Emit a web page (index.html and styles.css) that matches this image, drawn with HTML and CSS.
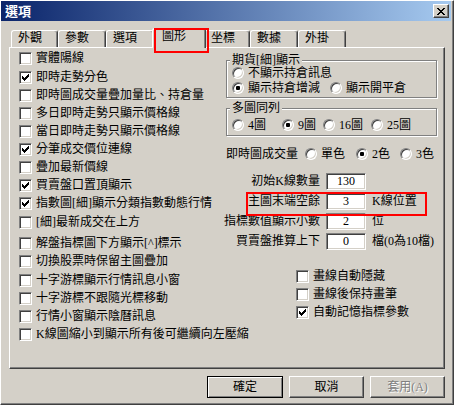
FILE: index.html
```html
<!DOCTYPE html>
<html lang="zh-Hant">
<head>
<meta charset="utf-8">
<title>選項</title>
<link rel="stylesheet" href="styles.css">
</head>
<body>
<div class="window">
  <div class="titlebar">
    <span class="title">選項</span>
    <span class="close"><svg width="8" height="7" viewBox="0 0 8 7"><path d="M0 0h2v1h-2zM6 0h2v1h-2zM1 1h2v1h-2zM5 1h2v1h-2zM2 2h4v1h-4zM3 3h2v1h-2zM2 4h4v1h-4zM1 5h2v1h-2zM5 5h2v1h-2zM0 6h2v1h-2zM6 6h2v1h-2z"/></svg></span>
  </div>
  <div class="client">
    <div class="tabs">
      <div class="tab">外觀</div>
      <div class="tab">參數</div>
      <div class="tab">選項</div>
      <div class="tab sel">圖形</div>
      <div class="tab">坐標</div>
      <div class="tab">數據</div>
      <div class="tab">外掛</div>
    </div>
    <div class="panel">
      <div class="col-left">
        <div class="cb"><span class="box"></span>實體陽線</div>
        <div class="cb mt1"><span class="box"><svg class="chk" width="7" height="7" viewBox="0 0 7 7"><path d="M0 2h1v3h-1zM1 3h1v3h-1zM2 4h1v3h-1zM3 3h1v3h-1zM4 2h1v3h-1zM5 1h1v3h-1zM6 0h1v3h-1z"/></svg></span>即時走勢分色</div>
        <div class="cb"><span class="box"></span>即時圖成交量疊加量比、持倉量</div>
        <div class="cb"><span class="box"></span>多日即時走勢只顯示價格線</div>
        <div class="cb"><span class="box"></span>當日即時走勢只顯示價格線</div>
        <div class="cb"><span class="box"><svg class="chk" width="7" height="7" viewBox="0 0 7 7"><path d="M0 2h1v3h-1zM1 3h1v3h-1zM2 4h1v3h-1zM3 3h1v3h-1zM4 2h1v3h-1zM5 1h1v3h-1zM6 0h1v3h-1z"/></svg></span>分筆成交價位連線</div>
        <div class="cb"><span class="box"></span>疊加最新價線</div>
        <div class="cb"><span class="box"><svg class="chk" width="7" height="7" viewBox="0 0 7 7"><path d="M0 2h1v3h-1zM1 3h1v3h-1zM2 4h1v3h-1zM3 3h1v3h-1zM4 2h1v3h-1zM5 1h1v3h-1zM6 0h1v3h-1z"/></svg></span>買賣盤口置頂顯示</div>
        <div class="cb"><span class="box"><svg class="chk" width="7" height="7" viewBox="0 0 7 7"><path d="M0 2h1v3h-1zM1 3h1v3h-1zM2 4h1v3h-1zM3 3h1v3h-1zM4 2h1v3h-1zM5 1h1v3h-1zM6 0h1v3h-1z"/></svg></span>指數圖[細]顯示分類指數動態行情</div>
        <div class="cb mt1"><span class="box"></span>[細]最新成交在上方</div>
        <div class="cb mt3"><span class="box"></span>解盤指標圖下方顯示[^]標示</div>
        <div class="cb"><span class="box"></span>切換股票時保留主圖疊加</div>
        <div class="cb mt1"><span class="box"></span>十字游標顯示行情訊息小窗</div>
        <div class="cb"><span class="box"></span>十字游標不跟隨光標移動</div>
        <div class="cb"><span class="box"></span>行情小窗顯示陰曆訊息</div>
        <div class="cb"><span class="box"></span>K線圖縮小到顯示所有後可繼續向左壓縮</div>
      </div>
      <div class="col-right">
        <fieldset class="group g1">
          <legend>期貨[細]顯示</legend>
          <div class="rrow r1"><span class="radio"><span class="rb"></span>不顯示持倉訊息</span></div>
          <div class="rrow r2"><span class="radio"><span class="rb on"></span>顯示持倉增減</span><span class="radio ml10"><span class="rb"></span>顯示開平倉</span></div>
        </fieldset>
        <fieldset class="group g2">
          <legend>多圖同列</legend>
          <div class="rrow r1"><span class="radio"><span class="rb"></span>4圖</span><span class="radio ml16"><span class="rb on"></span>9圖</span><span class="radio ml7"><span class="rb"></span>16圖</span><span class="radio ml8"><span class="rb"></span>25圖</span></div>
        </fieldset>
        <div class="rrow vol"><span>即時圖成交量</span><span class="radio ml7"><span class="rb"></span>單色</span><span class="radio ml11"><span class="rb on"></span>2色</span><span class="radio ml10"><span class="rb"></span>3色</span></div>
        <div class="frow first"><span class="lbl">初始K線數量</span><span class="field">130</span></div>
        <div class="frow hl"><span class="lbl">主圖末端空餘</span><span class="field">3</span><span class="unit">K線位置</span></div>
        <div class="frow"><span class="lbl">指標數值顯示小數</span><span class="field">2</span><span class="unit">位</span></div>
        <div class="frow"><span class="lbl">買賣盤推算上下</span><span class="field">0</span><span class="unit">檔(0為10檔)</span></div>
        <div class="rchecks">
          <div class="cb"><span class="box"></span>畫線自動隱藏</div>
          <div class="cb"><span class="box"></span>畫線後保持畫筆</div>
          <div class="cb"><span class="box"><svg class="chk" width="7" height="7" viewBox="0 0 7 7"><path d="M0 2h1v3h-1zM1 3h1v3h-1zM2 4h1v3h-1zM3 3h1v3h-1zM4 2h1v3h-1zM5 1h1v3h-1zM6 0h1v3h-1z"/></svg></span>自動記憶指標參數</div>
        </div>
      </div>
    </div>
    <div class="buttons">
      <div class="btn def">確定</div>
      <div class="btn">取消</div>
      <div class="btn dis">套用(A)</div>
    </div>
  </div>
</div>
</body>
</html>
```

FILE: styles.css
```css
* { box-sizing: border-box; }
html, body { margin: 0; padding: 0; }
body {
  width: 454px;
  height: 405px;
  overflow: hidden;
  background: #d4d0c8;
  font-family: "Liberation Serif", "Noto Sans CJK TC", serif;
  font-size: 12px;
  color: #000;
}
.window {
  width: 454px;
  height: 405px;
  background: #d4d0c8;
  border: 1px solid;
  border-color: #fff #404040 #404040 #fff;
  box-shadow: inset -1px -1px 0 #808080;
  padding: 0 2px 2px 0;
}
.titlebar {
  height: 20px;
  display: flex;
  align-items: flex-start;
  background: linear-gradient(to right, #0a246a, #a6caf0);
  padding-left: 4px;
}
.title {
  color: #fff;
  font-weight: bold;
  font-size: 13px;
  line-height: 20px;
  padding-top: 1px;
}
.close {
  margin-left: auto;
  margin-top: 3px;
  margin-right: 2px;
  width: 16px;
  height: 14px;
  background: #d4d0c8;
  border: 1px solid;
  border-color: #fff #404040 #404040 #fff;
  box-shadow: inset -1px -1px 0 #808080;
  display: flex;
  align-items: center;
  justify-content: center;
}
.close svg { display: block; }
.client { padding: 7px 6px 0 8px; }
.tabs {
  display: flex;
  align-items: flex-end;
  height: 19px;
  margin-left: 2px;
}
.tab {
  width: 48px;
  height: 17px;
  border-top: 1px solid #fff;
  border-left: 1px solid #fff;
  border-right: 1px solid #404040;
  box-shadow: inset -1px 0 0 #808080;
  border-radius: 3px 3px 0 0;
  padding-left: 6px;
  line-height: 14px;
  white-space: nowrap;
}
.tab:first-child { width: 47px; }
.tab.sel {
  width: 54px;
  height: 20px;
  margin: 0 -2px -1px;
  padding-left: 9px;
  position: relative;
  z-index: 1;
  background: #d4d0c8;
}
.tab.sel + .tab { width: 46px; }
.tab.sel::after {
  content: "";
  position: absolute;
  left: 1px;
  top: -1px;
  width: 51px;
  height: 21px;
  border: 2px solid #f00;
}
.panel {
  display: flex;
  height: 322px;
  border: 1px solid;
  border-color: #fff #404040 #404040 #fff;
  box-shadow: inset -1px -1px 0 #808080;
}
.col-left {
  width: 216px;
  flex: none;
  padding: 1px 0 0 9px;
}
.cb {
  display: flex;
  align-items: center;
  gap: 4px;
  height: 18px;
  line-height: 18px;
  white-space: nowrap;
}
.mt1 { margin-top: 1px; }
.mt3 { margin-top: 3px; }
.box {
  width: 13px;
  height: 13px;
  flex: none;
  background: #fff;
  border: 1px solid;
  border-color: #808080 #fff #fff #808080;
  box-shadow: inset 1px 1px 0 #404040, inset -1px -1px 0 #d4d0c8;
  display: flex;
  align-items: center;
  justify-content: center;
}
.chk { display: block; }
.col-right {
  width: 210px;
  flex: none;
  padding-top: 7px;
}
.group {
  margin: 0;
  padding: 0 0 2px 5px;
  width: 211px;
  min-width: 0;
  border: 1px solid #808080;
  box-shadow: inset 1px 1px 0 #fff, 1px 1px 0 #fff;
}
.group legend {
  padding: 0 2px;
  margin-left: -2px;
  line-height: 11px;
  background: #d4d0c8;
}
.g1 { height: 43px; }
.g2 { height: 33px; margin-top: 5px; }
.rrow {
  display: flex;
  align-items: center;
  height: 14px;
  line-height: 14px;
  white-space: nowrap;
}
.g1 .r2 { margin-top: 1px; }
.g2 .r1 { margin-top: 4px; }
.radio {
  display: flex;
  align-items: center;
  gap: 4px;
}
.rb {
  width: 12px;
  height: 12px;
  flex: none;
  border-radius: 50%;
  background: #fff;
  border: 1px solid;
  border-color: #808080 #fff #fff #808080;
  box-shadow: inset 1px 1px 0 #404040, inset -1px -1px 0 #d4d0c8;
  display: flex;
  align-items: center;
  justify-content: center;
}
.rb.on::after {
  content: "";
  width: 4px;
  height: 4px;
  border-radius: 1px;
  background: #000;
}
.ml7 { margin-left: 7px; }
.ml8 { margin-left: 8px; }
.ml10 { margin-left: 10px; }
.ml11 { margin-left: 11px; }
.ml16 { margin-left: 16px; }
.vol { margin-top: 11px; }
.frow {
  display: flex;
  align-items: center;
  height: 17px;
  margin-left: -6px;
  margin-top: 3px;
  white-space: nowrap;
  line-height: 15px;
}
.frow.first { margin-top: 12px; }
.frow.hl { position: relative; }
.frow.hl::after {
  content: "";
  position: absolute;
  left: 26px;
  top: -1px;
  width: 177px;
  height: 20px;
  border: 2px solid #f00;
}
.lbl {
  width: 100px;
  flex: none;
  text-align: right;
}
.field {
  margin-left: 6px;
  width: 40px;
  height: 17px;
  flex: none;
  background: #fff;
  border: 1px solid;
  border-color: #808080 #fff #fff #808080;
  box-shadow: inset 1px 1px 0 #404040, inset -1px -1px 0 #d4d0c8;
  text-align: center;
  line-height: 15px;
}
.unit { margin-left: 6px; }
.rchecks {
  margin-top: 17px;
  padding-left: 70px;
}
.buttons {
  display: flex;
  justify-content: flex-end;
  gap: 6px;
  margin-top: 7px;
}
.btn {
  width: 75px;
  height: 22px;
  border: 1px solid;
  border-color: #fff #404040 #404040 #fff;
  box-shadow: inset -1px -1px 0 #808080;
  display: flex;
  align-items: center;
  justify-content: center;
  line-height: 14px;
}
.btn.def {
  width: 76px;
  border-color: #000;
  box-shadow: inset 1px 1px 0 #fff, inset -1px -1px 0 #808080;
}
.btn.dis {
  color: #808080;
  text-shadow: 1px 1px 0 #fff;
}
```
